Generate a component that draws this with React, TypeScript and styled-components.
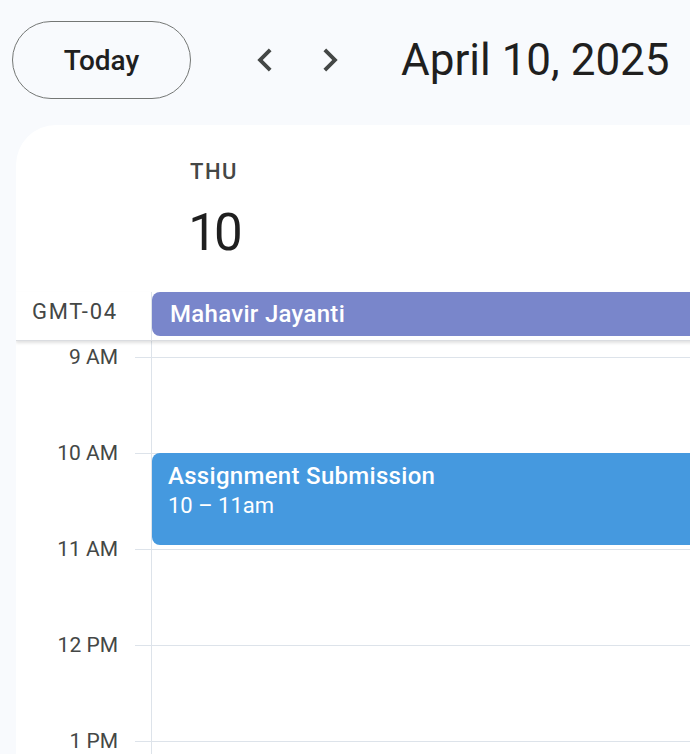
import React, { FC } from 'react'
import styled, { createGlobalStyle } from 'styled-components'

const GlobalStyle = createGlobalStyle`
  html, body {
    margin: 0;
    padding: 0;
    overflow: hidden;
    background: #f8fafd;
  }
  body {
    font-family: Roboto, 'Liberation Sans', sans-serif;
    color: #1f1f1f;
  }
`

const Page = styled.div`
  width: 100%;
  height: 754px;
  display: flex;
  flex-direction: column;
  background: #f8fafd;
`

const Header = styled.header`
  display: flex;
  align-items: center;
  height: 78px;
  padding: 21px 0 26px 12px;
  flex-shrink: 0;
`

const TodayButton = styled.button`
  width: 179px;
  height: 78px;
  border: 1.5px solid #747775;
  border-radius: 39px;
  background: transparent;
  font-family: Roboto, 'Liberation Sans', sans-serif;
  font-size: 28px;
  font-weight: 500;
  color: #1f1f1f;
  cursor: pointer;
`

const Nav = styled.div`
  display: flex;
  margin-left: 41px;
`

const NavButton = styled.button`
  width: 65px;
  height: 65px;
  display: flex;
  align-items: center;
  justify-content: center;
  padding: 0;
  border: none;
  background: transparent;
  color: #444746;
  cursor: pointer;
`

const DateTitle = styled.h1`
  margin: 0 0 0 39px;
  font-size: 44px;
  font-weight: 400;
  color: #1f1f1f;
  white-space: nowrap;
`

const Card = styled.main`
  flex: 1;
  min-height: 0;
  margin-left: 16px;
  width: calc(100% + 40px);
  background: #fff;
  border-top-left-radius: 40px;
  display: flex;
  flex-direction: column;
  overflow: hidden;
`

const DayHead = styled.div`
  flex-shrink: 0;
  padding: 31px 0 0 136px;
  height: 167px;
  box-sizing: border-box;
`

const DayLabel = styled.div`
  width: 124px;
  display: flex;
  flex-direction: column;
  align-items: center;
`

const Weekday = styled.div`
  font-size: 22px;
  line-height: 32px;
  font-weight: 500;
  letter-spacing: 1.6px;
  color: #444746;
`

const DayNumber = styled.div`
  margin-top: 13px;
  font-size: 51px;
  line-height: 64px;
  font-weight: 400;
  letter-spacing: -3px;
  color: #1f1f1f;
`

const AllDayRow = styled.div`
  flex-shrink: 0;
  display: grid;
  grid-template-columns: 136px 1fr;
  height: 48px;
  border-bottom: 1px solid #dadce0;
  box-shadow: 0 2px 3px rgba(0, 0, 0, 0.12);
  position: relative;
  z-index: 1;
`

const Zone = styled.div`
  border-right: 1px solid #dde3ea;
  padding-right: 33px;
  text-align: right;
  font-size: 22px;
  letter-spacing: 1.8px;
  line-height: 40px;
  color: #444746;
`

const AllDayEvent = styled.div`
  height: 44px;
  border-radius: 8px 0 0 8px;
  background: #7986cb;
  color: #fff;
  font-size: 24px;
  font-weight: 500;
  line-height: 44px;
  padding-left: 18px;
  letter-spacing: 0.3px;
`

const Body = styled.div`
  flex: 1;
  min-height: 0;
  overflow: hidden;
  display: grid;
  grid-template-columns: 136px 1fr;
  align-items: start;
  padding-top: 17px;
  margin-top: -1px;
`

const Gutter = styled.div`
  border-right: 1px solid #dde3ea;
  margin-top: -17px;
  padding-top: 17px;
`

const HourSlot = styled.div`
  height: 96px;
  position: relative;

  &::after {
    content: '';
    position: absolute;
    top: 0;
    right: 0;
    width: 16px;
    border-top: 1px solid #dde3ea;
  }
`

const HourLabel = styled.div`
  padding-right: 33px;
  text-align: right;
  font-size: 21px;
  line-height: 24px;
  color: #444746;
  transform: translateY(-50%);
`

const DayColumn = styled.div`
  position: relative;
`

const HourCell = styled.div`
  height: 96px;
  border-top: 1px solid #dde3ea;
  box-sizing: border-box;
`

const TimedEvent = styled.div<{ $top: number; $height: number; $color: string }>`
  position: absolute;
  left: 0;
  right: 0;
  top: ${({ $top }) => $top}px;
  height: ${({ $height }) => $height}px;
  background: ${({ $color }) => $color};
  border-radius: 8px 0 0 8px;
  color: #fff;
  padding: 8px 0 0 16px;
  box-sizing: border-box;
`

const EventTitle = styled.div`
  font-size: 24px;
  font-weight: 500;
  line-height: 30px;
  letter-spacing: 0.3px;
`

const EventTime = styled.div`
  font-size: 22px;
  line-height: 30px;
`

const Chevron: FC<{ dir: 'left' | 'right' }> = ({ dir }) => (
  <svg width="46" height="46" viewBox="0 0 24 24" fill="currentColor">
    {dir === 'left' ? (
      <path d="M15.41 7.41L14 6l-6 6 6 6 1.41-1.41L10.83 12z" />
    ) : (
      <path d="M10 6L8.59 7.41 13.17 12l-4.58 4.59L10 18l6-6z" />
    )}
  </svg>
)

const hours = ['9 AM', '10 AM', '11 AM', '12 PM', '1 PM', '2 PM']

const App: FC = () => {
  return (
    <Page>
      <GlobalStyle />
      <Header>
        <TodayButton>Today</TodayButton>
        <Nav>
          <NavButton aria-label="Previous day">
            <Chevron dir="left" />
          </NavButton>
          <NavButton aria-label="Next day">
            <Chevron dir="right" />
          </NavButton>
        </Nav>
        <DateTitle>April 10, 2025</DateTitle>
      </Header>
      <Card>
        <DayHead>
          <DayLabel>
            <Weekday>THU</Weekday>
            <DayNumber>10</DayNumber>
          </DayLabel>
        </DayHead>
        <AllDayRow>
          <Zone>GMT-04</Zone>
          <div>
            <AllDayEvent>Mahavir Jayanti</AllDayEvent>
          </div>
        </AllDayRow>
        <Body>
          <Gutter>
            {hours.map((h) => (
              <HourSlot key={h}>
                <HourLabel>{h}</HourLabel>
              </HourSlot>
            ))}
          </Gutter>
          <DayColumn>
            {hours.map((h) => (
              <HourCell key={h} />
            ))}
            <TimedEvent $top={96} $height={92} $color="#4599df">
              <EventTitle>Assignment Submission</EventTitle>
              <EventTime>10 – 11am</EventTime>
            </TimedEvent>
          </DayColumn>
        </Body>
      </Card>
    </Page>
  )
}

export default App
